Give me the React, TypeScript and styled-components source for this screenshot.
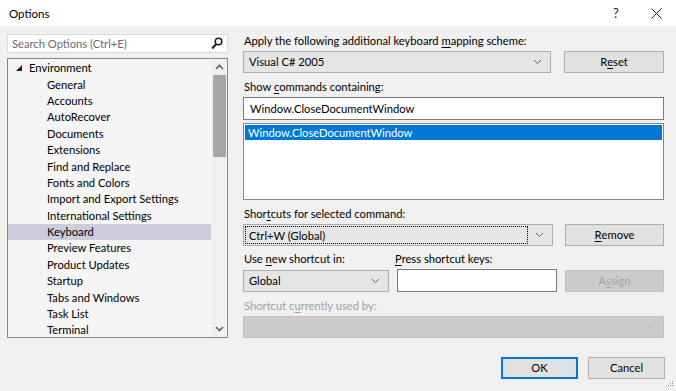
import React from 'react'
import styled, { createGlobalStyle } from 'styled-components'

const Global = createGlobalStyle`
  body {
    margin: 0;
    background: #f0f0f0;
    font-family: 'Segoe UI', Lato, 'Noto Sans', sans-serif;
    font-size: 11.2px;
    color: #000;
  }
`

const Window = styled.div`
  width: 676px;
  height: 391px;
  background: #f0f0f0;
  display: flex;
  flex-direction: column;
  overflow: hidden;
  position: relative;
`

const TitleBar = styled.div`
  height: 26px;
  background: #fff;
  display: flex;
  align-items: center;
  padding-left: 9px;
  box-sizing: border-box;
`

const Title = styled.div`
  flex: 1;
  font-size: 11.5px;
`

const TitleBtn = styled.div`
  width: 40px;
  height: 26px;
  display: flex;
  align-items: center;
  justify-content: center;
  font-size: 13px;
  color: #222;
`

const Body = styled.div`
  display: flex;
  padding: 8px 0 0 7px;
  gap: 15px;
  height: 312px;
  box-sizing: border-box;
`

const LeftCol = styled.div`
  width: 221px;
  display: flex;
  flex-direction: column;
  gap: 5px;
`

const Search = styled.div`
  height: 19px;
  border: 1px solid #d9d9d9;
  background: #fff;
  display: flex;
  align-items: center;
  padding: 0 4px 0 4px;
  color: #6d6d6d;
`

const SearchText = styled.span`
  flex: 1;
`

const Tree = styled.div`
  height: 280px;
  box-sizing: border-box;
  border: 1px solid #828790;
  background: #f5f5f5;
  display: flex;
`

const TreeItems = styled.div`
  flex: 1;
  padding-top: 1px;
`

const Node = styled.div<{ $depth: number; $sel?: boolean }>`
  height: 16.4px;
  line-height: 16px;
  padding-left: ${(p) => (p.$depth ? 39 : 8)}px;
  background: ${(p) => (p.$sel ? '#ccccdb' : 'transparent')};
  display: flex;
  align-items: center;
  gap: 7px;
  white-space: nowrap;
`

const ScrollBar = styled.div`
  width: 16px;
  display: flex;
  flex-direction: column;
  align-items: center;
  background: #f0f0f0;
`

const ScrollArrow = styled.div`
  height: 16px;
  display: flex;
  align-items: center;
  justify-content: center;
`

const Thumb = styled.div`
  width: 13px;
  height: 82px;
  background: #a6a6a6;
`

const Spacer = styled.div`
  flex: 1;
`

const RightCol = styled.div`
  width: 421px;
  display: flex;
  flex-direction: column;
`

const Label = styled.div<{ $disabled?: boolean; $top?: number; $w?: number }>`
  height: 15px;
  line-height: 14px;
  padding-left: 1px;
  width: ${(p) => (p.$w ? `${p.$w}px` : 'auto')};
  margin-top: ${(p) => p.$top ?? 0}px;
  margin-bottom: 2px;
  color: ${(p) => (p.$disabled ? '#a0a0a0' : '#000')};
  white-space: nowrap;
`

const U = styled.span`
  text-decoration: underline;
  text-underline-offset: 2px;
`

const Row = styled.div`
  display: flex;
  align-items: center;
  justify-content: space-between;
`

const LabelRow = styled.div`
  display: flex;
  margin-top: 6px;
`

const Combo = styled.div<{ $w: number; $disabled?: boolean }>`
  width: ${(p) => p.$w}px;
  height: 22px;
  box-sizing: border-box;
  border: 1px solid ${(p) => (p.$disabled ? '#bfbfbf' : '#adadad')};
  background: ${(p) => (p.$disabled ? '#cccccc' : '#e5e5e5')};
  display: flex;
  align-items: center;
  padding: 0 8px 0 5px;
`

const ComboText = styled.span<{ $focus?: boolean }>`
  flex: 1;
  height: 18px;
  line-height: 17px;
  box-sizing: border-box;
  margin-left: ${(p) => (p.$focus ? -4 : 0)}px;
  margin-right: ${(p) => (p.$focus ? 7 : 0)}px;
  padding-left: ${(p) => (p.$focus ? 3 : 0)}px;
  border: ${(p) => (p.$focus ? '1px dotted #000' : 'none')};
`

const Button = styled.div<{ $w: number; $disabled?: boolean; $default?: boolean }>`
  width: ${(p) => p.$w}px;
  height: 22px;
  box-sizing: border-box;
  border: ${(p) =>
    p.$default ? '2px solid #0078d7' : p.$disabled ? '1px solid #bfbfbf' : '1px solid #adadad'};
  background: ${(p) => (p.$disabled ? '#cccccc' : '#e1e1e1')};
  color: ${(p) => (p.$disabled ? '#a0a0a0' : '#000')};
  display: flex;
  align-items: center;
  justify-content: center;
  padding-bottom: 1px;
`

const TextBox = styled.div<{ $w?: number }>`
  width: ${(p) => (p.$w ? `${p.$w}px` : 'auto')};
  height: 23px;
  box-sizing: border-box;
  border: 1px solid #7a7a7a;
  background: #fff;
  display: flex;
  align-items: center;
  padding-left: 6px;
`

const ListBox = styled.div`
  height: 77px;
  margin-top: 3px;
  box-sizing: border-box;
  border: 1px solid #828790;
  background: #fff;
  padding: 1px;
`

const ListItem = styled.div<{ $sel?: boolean }>`
  height: 15px;
  line-height: 15px;
  padding-left: 3px;
  background: ${(p) => (p.$sel ? '#0078d7' : 'transparent')};
  color: ${(p) => (p.$sel ? '#fff' : '#000')};
`

const Footer = styled.div`
  display: flex;
  justify-content: flex-end;
  gap: 10px;
  padding: 19px 11px 0 0;
`

const Grip = styled.div`
  position: absolute;
  right: 2px;
  bottom: 2px;
`

const Chevron = ({ color = '#606060', up = false, bold = false }: { color?: string; up?: boolean; bold?: boolean }) => (
  <svg width="9" height="6" viewBox="0 0 9 6">
    <path
      d={up ? 'M1 5 L4.5 1.5 L8 5' : 'M1 1 L4.5 4.5 L8 1'}
      fill="none"
      stroke={color}
      strokeWidth={bold ? 1.6 : 1}
    />
  </svg>
)

const treeNodes = [
  'General',
  'Accounts',
  'AutoRecover',
  'Documents',
  'Extensions',
  'Find and Replace',
  'Fonts and Colors',
  'Import and Export Settings',
  'International Settings',
  'Keyboard',
  'Preview Features',
  'Product Updates',
  'Startup',
  'Tabs and Windows',
  'Task List',
  'Terminal',
]

export default function App() {
  return (
    <Window>
      <Global />
      <TitleBar>
        <Title>Options</Title>
        <TitleBtn>?</TitleBtn>
        <TitleBtn>
          <svg width="11" height="11" viewBox="0 0 11 11">
            <path d="M0.5 0.5 L10.5 10.5 M10.5 0.5 L0.5 10.5" stroke="#222" strokeWidth="1" />
          </svg>
        </TitleBtn>
      </TitleBar>
      <Body>
        <LeftCol>
          <Search>
            <SearchText>Search Options (Ctrl+E)</SearchText>
            <svg width="12" height="13" viewBox="0 0 12 13">
              <circle cx="7.5" cy="4.5" r="3.3" fill="none" stroke="#1e1e1e" strokeWidth="1.6" />
              <path d="M5.2 7 L1.2 11.5" stroke="#1e1e1e" strokeWidth="2" />
            </svg>
          </Search>
          <Tree>
            <TreeItems>
              <Node $depth={0}>
                <svg width="6" height="6" viewBox="0 0 6 6">
                  <path d="M6 0 L6 6 L0 6 Z" fill="#1e1e1e" />
                </svg>
                Environment
              </Node>
              {treeNodes.map((n) => (
                <Node key={n} $depth={1} $sel={n === 'Keyboard'}>
                  {n}
                </Node>
              ))}
            </TreeItems>
            <ScrollBar>
              <ScrollArrow>
                <Chevron up bold />
              </ScrollArrow>
              <Thumb />
              <Spacer />
              <ScrollArrow>
                <Chevron bold />
              </ScrollArrow>
            </ScrollBar>
          </Tree>
        </LeftCol>
        <RightCol>
          <Label>
            Apply the following additional keyboard <U>m</U>apping scheme:
          </Label>
          <Row>
            <Combo $w={308}>
              <ComboText>Visual C# 2005</ComboText>
              <Chevron />
            </Combo>
            <Button $w={100}>
              R<U>e</U>set
            </Button>
          </Row>
          <Label $top={7}>
            Show <U>c</U>ommands containing:
          </Label>
          <TextBox>Window.CloseDocumentWindow</TextBox>
          <ListBox>
            <ListItem $sel>Window.CloseDocumentWindow</ListItem>
          </ListBox>
          <Label $top={7}>
            Shor<U>t</U>cuts for selected command:
          </Label>
          <Row>
            <Combo $w={310}>
              <ComboText $focus>Ctrl+W (Global)</ComboText>
              <Chevron />
            </Combo>
            <Button $w={99}>
              <U>R</U>emove
            </Button>
          </Row>
          <LabelRow>
            <Label $w={150}>
              Use <U>n</U>ew shortcut in:
            </Label>
            <Label>
              <U>P</U>ress shortcut keys:
            </Label>
          </LabelRow>
          <Row>
            <Combo $w={146}>
              <ComboText>Global</ComboText>
              <Chevron />
            </Combo>
            <TextBox $w={160} />
            <Button $w={99} $disabled>
              A<U>s</U>sign
            </Button>
          </Row>
          <Label $disabled $top={7}>
            Shortcut c<U>u</U>rrently used by:
          </Label>
          <Combo $w={421} $disabled>
            <ComboText />
            <Chevron color="#b0b0b0" />
          </Combo>
        </RightCol>
      </Body>
      <Footer>
        <Button $w={77} $default>
          OK
        </Button>
        <Button $w={77}>Cancel</Button>
      </Footer>
      <Grip>
        <svg width="8" height="8" viewBox="0 0 8 8">
          {[
            [6, 2],
            [6, 4],
            [4, 4],
            [6, 6],
            [4, 6],
            [2, 6],
          ].map(([x, y]) => (
            <rect key={`${x}-${y}`} x={x} y={y} width="1" height="1" fill="#a0a0a0" />
          ))}
        </svg>
      </Grip>
    </Window>
  )
}
